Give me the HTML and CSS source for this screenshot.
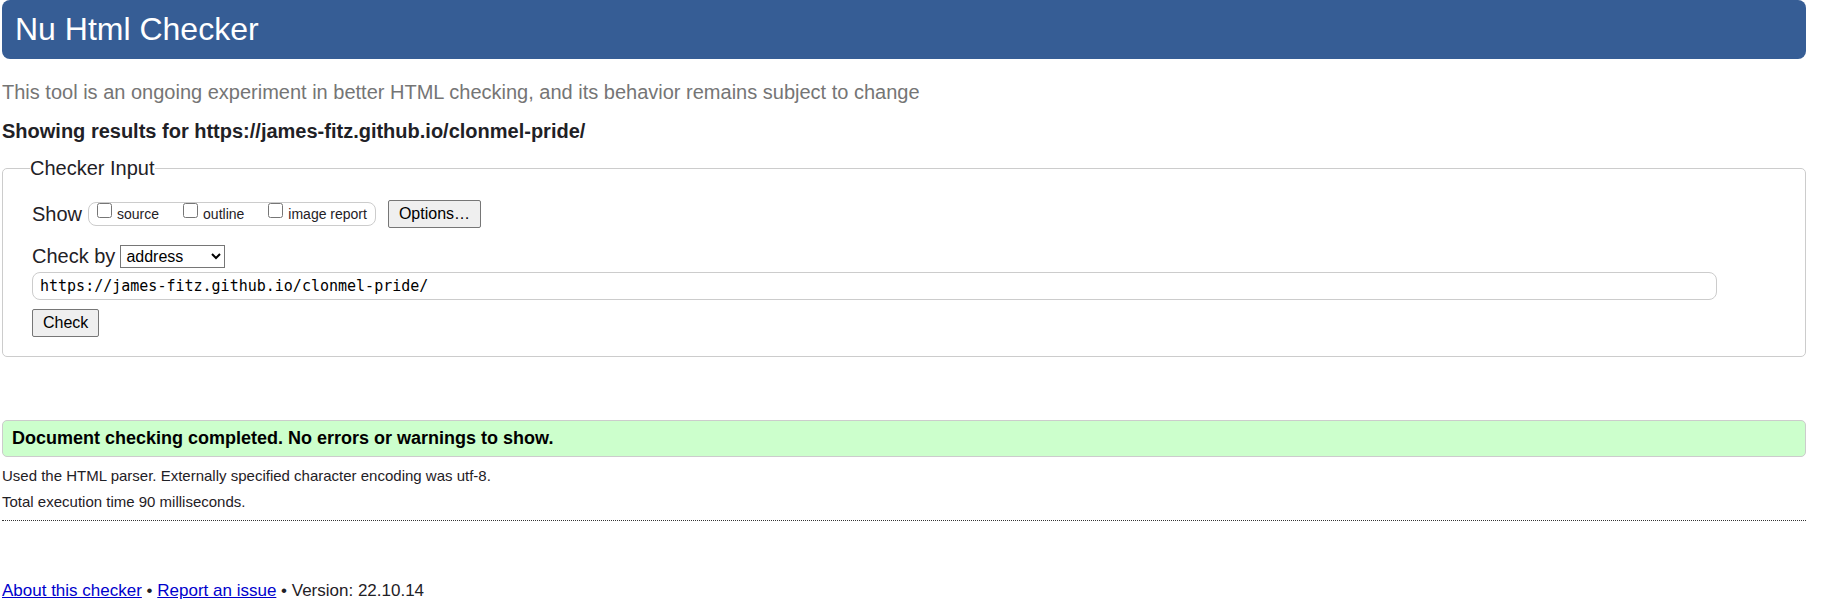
FILE: index.html
```html
<!DOCTYPE html>
<html lang="en">
<head>
<meta charset="utf-8">
<title>Nu Html Checker</title>
<link rel="stylesheet" href="styles.css">
</head>
<body>
<header class="banner"><h1 class="banner-title">Nu Html Checker</h1></header>
<main>
  <p class="tagline">This tool is an ongoing experiment in better HTML checking, and its behavior remains subject to change</p>
  <h2 class="results-title">Showing results for https://james-fitz.github.io/clonmel-pride/</h2>
  <form class="checker">
    <fieldset class="panel">
      <legend class="panel-legend">Checker Input</legend>
      <div class="row show-row">
        <span>Show</span>
        <div class="show-options">
          <label class="option"><input class="tick" type="checkbox">source</label>
          <label class="option"><input class="tick" type="checkbox">outline</label>
          <label class="option"><input class="tick" type="checkbox">image report</label>
        </div>
        <button class="button" type="button">Options…</button>
      </div>
      <div class="row by-row">
        <label for="method">Check by</label>
        <select class="method" id="method"><option>address</option><option>file upload</option><option>text input</option></select>
      </div>
      <input class="address" type="url" aria-label="Address" value="https://james-fitz.github.io/clonmel-pride/">
      <button class="button" type="button">Check</button>
    </fieldset>
  </form>
  <p class="success">Document checking completed. No errors or warnings to show.</p>
  <p class="detail">Used the HTML parser. Externally specified character encoding was utf-8.</p>
  <p class="detail">Total execution time 90 milliseconds.</p>
</main>
<footer class="footer"><a class="link" href="#about">About this checker</a> • <a class="link" href="#issue">Report an issue</a> • Version: 22.10.14</footer>
</body>
</html>
```
FILE: styles.css
```css
* { box-sizing: border-box; }
body {
  margin: 0 18px 0 2px;
  background: #fff;
  color: #1f2126;
  font: 20px/24px "Liberation Sans", Arial, sans-serif;
}
.banner {
  padding: 11px 13px 12px;
  border-radius: 8px;
  background: #365d95;
  color: #fff;
}
.banner-title { margin: 0; font-size: 32px; line-height: 36px; font-weight: 400; }
.tagline { margin: 21px 0 0; color: #757575; }
.results-title { margin: 15px 0 0; font-size: 20px; line-height: 24px; }
.checker { margin-top: 13px; }
.panel {
  display: flex;
  flex-direction: column;
  align-items: flex-start;
  margin: 0;
  padding: 20px 88px 19px 29px;
  border: 1px solid #ccc;
  border-radius: 5px;
}
.panel-legend { margin-left: -2px; padding: 0; }
.row { display: flex; align-items: center; }
.show-row { gap: 6px; }
.show-options {
  display: flex;
  gap: 24px;
  height: 24px;
  padding: 0 8px;
  border: 1px solid #ccc;
  border-radius: 8px;
}
.option { display: flex; gap: 5px; font-size: 14px; line-height: 23px; }
.tick { width: 15px; height: 15px; margin: 0; }
.button {
  height: 28px;
  padding: 0 10px;
  border: 1px solid #767676;
  border-radius: 2px;
  background: #efefef;
  color: #000;
  font: 16px/24px "Liberation Sans", Arial, sans-serif;
}
.show-row .button { margin-left: 6px; }
.by-row { gap: 5px; margin: 16px 0 4px; }
.method {
  width: 105px;
  height: 23px;
  padding: 0 0 0 1px;
  border: 1px solid #767676;
  background: #fff;
  color: #000;
  font: 16px/20px "Liberation Sans", Arial, sans-serif;
}
.address {
  width: 100%;
  height: 28px;
  margin-bottom: 9px;
  padding: 0 7px;
  border: 1px solid #ccc;
  border-radius: 8px;
  color: #000;
  font: 15px/24px "DejaVu Sans Mono", monospace;
}
.success {
  margin: 63px 0 6px;
  padding: 5px 9px 6px;
  border: 1px solid #ccc;
  border-radius: 5px;
  background: #cfc;
  color: #000;
  font-size: 18px;
  font-weight: 700;
}
.detail { margin: 0; font-size: 15px; line-height: 26px; }
.footer { margin-top: 5px; padding-top: 58px; border-top: 1px dotted #333; font-size: 17px; }
.link { color: #00c; }
```
